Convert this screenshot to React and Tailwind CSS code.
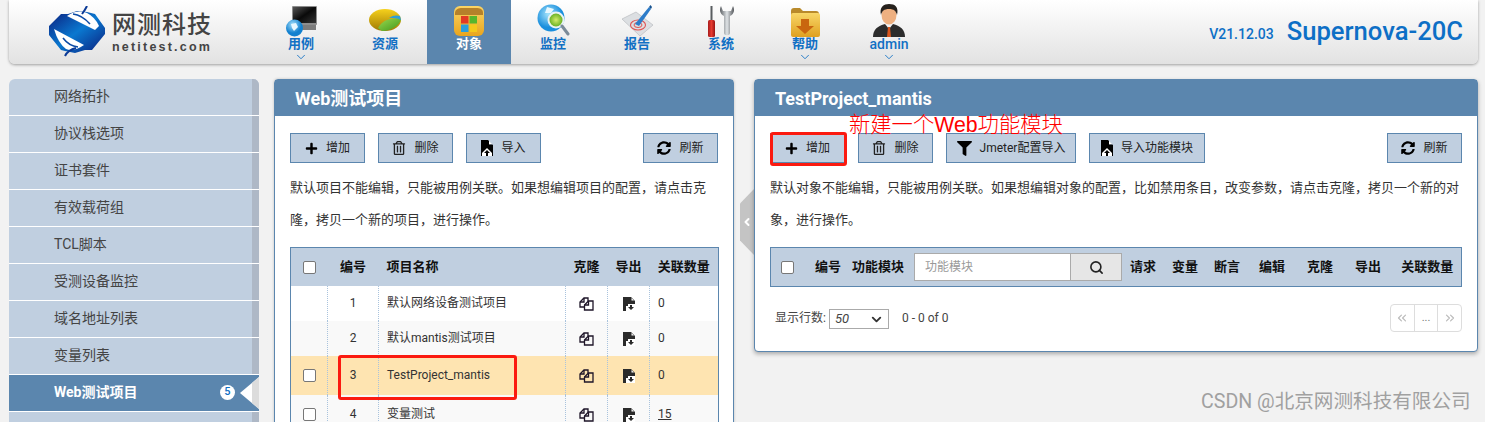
import React from "react";
import { ChevronDown, ChevronLeft, Search, ChevronsLeft, ChevronsRight } from "lucide-react";
import { FaPlus, FaRegTrashAlt, FaFilter, FaSyncAlt } from "react-icons/fa";

const FONT = "font-['Roboto','Noto_Sans_CJK_SC',sans-serif]";

const Logo = () => (
  <svg width="56" height="52" viewBox="0 0 56 52">
    <defs>
      <linearGradient id="lg" x1="0" y1="0" x2="1" y2="1">
        <stop offset="0.1" stopColor="#0b2f8c" />
        <stop offset=".5" stopColor="#0a78d0" />
        <stop offset="0.9" stopColor="#0b2f8c" />
      </linearGradient>
    </defs>
    <path d="M0 20 L12 8 H19 L28 5 L38 6 L46 8 L56 22 V28 L43 44 H36 L26 47 L16 45 L12 44 L0 29 Z" fill="url(#lg)" />
    <path d="M18 10 Q28 3 38 7 Q46 11 50 20 L46 24 Z" fill="#fff" />
    <path d="M5 23 L35 39 Q25 46 17 43 Q9 37 5 23 Z" fill="#fff" />
    <path d="M24 8 Q33 9 41 18" fill="none" stroke="#0b4aa5" strokeWidth="1.6" />
    <path d="M14 32 Q20 40 29 41" fill="none" stroke="#0b4aa5" strokeWidth="1.6" />
    <path d="M33 8 Q36 4 38 0" fill="none" stroke="#0b3a96" strokeWidth="2" />
    <path d="M16 50 Q19 44 27 42" fill="none" stroke="#0b3a96" strokeWidth="2" />
  </svg>
);

const IconMonitor = () => (
  <svg width="32" height="32" viewBox="0 0 32 32">
    <defs>
      <linearGradient id="m1" x1="0" y1="0" x2="1" y2="1"><stop offset="0" stopColor="#555" /><stop offset=".5" stopColor="#0a0a0a" /><stop offset="1" stopColor="#333" /></linearGradient>
      <radialGradient id="m2" cx=".4" cy=".3"><stop offset="0" stopColor="#a5e0fb" /><stop offset="1" stopColor="#1180cf" /></radialGradient>
    </defs>
    <rect x="7" y="1" width="25" height="19" rx="1" fill="#8d8d8d" />
    <rect x="8" y="2" width="23" height="16" fill="url(#m1)" />
    <path d="M16 20 H31 V25 H16 Z" fill="#7c7c7c" />
    <circle cx="9.5" cy="23" r="8.5" fill="url(#m2)" />
    <path d="M6 19 L11 18 L13 22 L9 26 L7 23 Z" fill="#e8f8ff" />
  </svg>
);
const IconPie = () => (
  <svg width="32" height="32" viewBox="0 0 32 32">
    <defs>
      <linearGradient id="p1" x1="0" y1="0" x2="0" y2="1"><stop offset="0" stopColor="#f6d11c" /><stop offset="1" stopColor="#a07a04" /></linearGradient>
      <linearGradient id="p2" x1="0" y1="0" x2="1" y2="1"><stop offset="0" stopColor="#9ad94e" /><stop offset="1" stopColor="#3f961c" /></linearGradient>
    </defs>
    <ellipse cx="16" cy="15" rx="16" ry="11" fill="url(#p1)" />
    <path d="M9 23 C13 16 20 12 32 14 C31 20 22 26 13 26 Z" fill="url(#p2)" />
    <path d="M20 13 C24 10 28 10 31 11 L32 15 C28 13 24 13 20 13 Z" fill="#2c9fd8" />
  </svg>
);
const IconWinFolder = () => (
  <svg width="32" height="32" viewBox="0 0 32 32">
    <defs>
      <linearGradient id="w1" x1="0" y1="0" x2="0" y2="1"><stop offset="0" stopColor="#fbd566" /><stop offset="1" stopColor="#e9a51d" /></linearGradient>
    </defs>
    <rect x="1" y="1" width="30" height="30" rx="6" fill="url(#w1)" />
    <path d="M2 8 C2 4 6 3 9 3 H23 C27 3 30 4 30 8 V10 H2 Z" fill="#b5812a" />
    <rect x="8" y="11" width="7.5" height="7.5" fill="#e23b24" />
    <rect x="16.5" y="11" width="7.5" height="7.5" fill="#57b62c" />
    <rect x="8" y="19.5" width="7.5" height="7.5" fill="#2a9edb" />
    <rect x="16.5" y="19.5" width="7.5" height="7.5" fill="#f4c91c" />
  </svg>
);
const IconGlobeLens = () => (
  <svg width="33" height="33" viewBox="0 0 33 33">
    <defs>
      <radialGradient id="g1" cx=".4" cy=".35"><stop offset="0" stopColor="#a4e3fb" /><stop offset="1" stopColor="#1a8fdd" /></radialGradient>
      <radialGradient id="g2"><stop offset="0" stopColor="#d4ec6a" /><stop offset="1" stopColor="#5aa91a" /></radialGradient>
    </defs>
    <circle cx="14" cy="14" r="13.5" fill="url(#g1)" />
    <path d="M10 3 L17 5 L14 9 L8 9 Z" fill="#e6f8ff" />
    <circle cx="19" cy="16" r="7.5" fill="url(#g2)" stroke="#e9f2f4" strokeWidth="2" />
    <path d="M25 22 L31 30" stroke="#7b8b99" strokeWidth="3" strokeLinecap="round" />
  </svg>
);
const IconReport = () => (
  <svg width="33" height="33" viewBox="0 0 33 33">
    <path d="M1 15 L15 8 L32 21 L19 32 Z" fill="#dcdfe2" stroke="#b9bcc0" strokeWidth=".7" />
    <ellipse cx="17" cy="21" rx="7.5" ry="5" fill="none" stroke="#e05454" strokeWidth="1.1" />
    <ellipse cx="17" cy="21" rx="4" ry="2.5" fill="none" stroke="#e05454" strokeWidth="1" />
    <path d="M14 20 L28 3 L30 5 L18 22 Z" fill="#2d7cc9" />
    <path d="M28 3 L29.5 1 L31 3 L30 5 Z" fill="#16528f" />
  </svg>
);
const IconTools = () => (
  <svg width="28" height="32" viewBox="0 0 28 32">
    <defs>
      <linearGradient id="t1" x1="0" x2="1"><stop offset="0" stopColor="#a81c1c" /><stop offset=".5" stopColor="#e53a30" /><stop offset="1" stopColor="#981414" /></linearGradient>
      <linearGradient id="t2" x1="0" x2="1"><stop offset="0" stopColor="#5b5f63" /><stop offset=".5" stopColor="#dfe3e6" /><stop offset="1" stopColor="#53565a" /></linearGradient>
    </defs>
    <rect x="3.5" y="1" width="2" height="15" fill="#595d60" />
    <rect x="1" y="15" width="7" height="17" rx="1.5" fill="url(#t1)" />
    <path d="M14 1 C12 5 13 9 17 11 V28 C17 31 23 31 23 28 V11 C27 9 28 5 26 1 L24 6 H16 Z" fill="url(#t2)" />
  </svg>
);
const IconHelpFolder = () => (
  <svg width="30" height="30" viewBox="0 0 30 30">
    <defs>
      <linearGradient id="h1" x1="0" y1="0" x2="0" y2="1"><stop offset="0" stopColor="#f8d667" /><stop offset="1" stopColor="#dfa020" /></linearGradient>
    </defs>
    <path d="M1 4 C1 2 2 1 4 1 H10 L13 4 H26 C28 4 29 5 29 7 V10 H1 Z" fill="#b98a2b" />
    <rect x="1" y="6" width="29" height="24" rx="2" fill="url(#h1)" />
    <path d="M11 12 H19 V19 H24 L15 27 L6 19 H11 Z" fill="#c9660f" />
  </svg>
);
const IconAdmin = () => (
  <svg width="32" height="33" viewBox="0 0 32 33">
    <path d="M0 33 C0 25 5 22 12 20 H20 C27 22 32 25 32 33 Z" fill="#2c2c2c" />
    <path d="M12 20 L16 25 L20 20 Z" fill="#f2f2f2" />
    <path d="M15 23 H17 L18 33 H14 Z" fill="#d8551d" />
    <ellipse cx="16" cy="11" rx="7.5" ry="9.5" fill="#eeb081" />
    <path d="M8 11 C6 3 11 0 16 0 C22 0 26 3 24 11 C23 7 21 5 16 5 C11 5 9 7 8 11 Z" fill="#26211d" />
  </svg>
);

const navItems = [
  { label: "用例", icon: <IconMonitor />, caret: true },
  { label: "资源", icon: <IconPie /> },
  { label: "对象", icon: <IconWinFolder />, active: true },
  { label: "监控", icon: <IconGlobeLens /> },
  { label: "报告", icon: <IconReport /> },
  { label: "系统", icon: <IconTools /> },
  { label: "帮助", icon: <IconHelpFolder />, caret: true },
  { label: "admin", icon: <IconAdmin />, caret: true },
];

const Header = () => (
  <header className="mx-[9px] mr-[7px] h-[64px] flex rounded-b-[6px] bg-gradient-to-b from-[#ffffff] to-[#e2e2e2] shadow-[0_1px_3px_rgba(0,0,0,0.35)]">
    <div className="w-[250px] flex items-center pl-[40px] shrink-0">
      <Logo />
      <div className="ml-[7px] flex flex-col">
        <span className="text-[24px] leading-[28px] font-medium text-[#444] tracking-[1px]">网测科技</span>
        <span className="mt-[1px] font-['Liberation_Sans',sans-serif] text-[12.5px] leading-[14px] font-bold text-[#444] tracking-[2.2px]">netitest.com</span>
      </div>
    </div>
    <nav className="flex">
      {navItems.map((n) => (
        <div key={n.label} className={`w-[84px] h-[64px] relative flex flex-col items-center ${n.active ? "bg-[#5b86ae] text-white" : "text-[#1170c4]"}`}>
          <div className="h-[35px] mt-[2px] flex items-end justify-center">{n.icon}</div>
          <span className={`mt-[-2px] leading-[18px] ${n.label === "admin" ? "text-[14px] font-medium" : "text-[13px] font-bold"}`}>{n.label}</span>
          {n.caret && <ChevronDown size={14} strokeWidth={1.5} className="absolute top-[50px] text-[#1170c4]" />}
        </div>
      ))}
    </nav>
    <div className="ml-auto mr-[15px] flex items-center gap-[13px] text-[#0d6fc6] font-medium">
      <span className="text-[14px] mt-[5px]">V21.12.03</span>
      <span className="text-[25.6px] leading-[30px] -mt-[2px]">Supernova-20C</span>
    </div>
  </header>
);

const sideItems = ["网络拓扑", "协议栈选项", "证书套件", "有效载荷组", "TCL脚本", "受测设备监控", "域名地址列表", "变量列表", "Web测试项目", ""];

const Sidebar = () => (
  <aside className="w-[250px] ml-[9px] shrink-0 rounded-t-[6px] overflow-hidden self-start">
    {sideItems.map((t) => {
      const active = t === "Web测试项目";
      return (
        <div key={t || "empty"} className={`h-[37px] flex items-stretch border-b border-white ${active ? "bg-[#5b86ae]" : "bg-[#c0cfe0]"}`}>
          <div className={`flex-1 pl-[45px] pb-[2px] flex items-center text-[14px] ${active ? "text-white font-bold" : "text-[#444]"}`}>
            {t}
            {active && (
              <span className="ml-auto mr-[17px] w-[15px] h-[15px] rounded-full bg-white text-[#1170c4] text-[11px] font-medium flex items-center justify-center">5</span>
            )}
          </div>
          {active ? (
            <svg width="19" height="36" viewBox="0 0 19 36" className="-ml-[12px]">
              <path d="M0 18 L19 2 V34 Z" fill="#ffffff" />
              <path d="M12 8 L19 2 V34 L12 28 Z" fill="#dcdcdc" />
            </svg>
          ) : (
            <div className="w-[7px] bg-[#aeb8c6]" />
          )}
        </div>
      );
    })}
  </aside>
);

const Btn = ({ w, icon, children }) => (
  <button className={`${w} h-[30px] shrink-0 border border-[#5b86ae] bg-[#c0cfe0] flex items-center justify-center gap-[8px] text-[12px] text-[#222]`}>
    {icon}
    <span>{children}</span>
  </button>
);

const ImportIcon = () => (
  <svg width="12" height="16" viewBox="0 0 12 16">
    <path d="M0 0 H7 L12 5 V16 H0 Z" fill="#000" />
    <path d="M8 0.5 L12 4.5 H8 Z" fill="#c0cfe0" />
    <path d="M8 1 L11 4 H8 Z" fill="#fff" />
    <path d="M6 8 L11 13 V16 H1 V13 Z" fill="#fff" />
    <path d="M6 10 L9 13 H7 V16 H5 V13 H3 Z" fill="#000" />
  </svg>
);
const ExportIcon = () => (
  <svg width="12" height="14" viewBox="0 0 12 14" className="inline-block">
    <path d="M0 0 H8 L12 4 V14 H0 Z" fill="#2b2b2b" />
    <path d="M8.5 1 L11 3.5 H8.5 Z" fill="#fff" />
    <path d="M3 9 H5 V7 H12 V14 H3 Z" fill="#fff" />
    <path d="M7 8 H9 V10 H11 L8 13 L5 10 H7 Z" fill="#2b2b2b" />
  </svg>
);
const CloneIcon = () => (
  <svg width="15" height="15" viewBox="0 0 15 15" fill="none" stroke="#1e1528" strokeWidth="1.3" className="inline-block">
    <path d="M5.5 11 H1 V6 L5 2 H9 V5" />
    <path d="M5 2 V6 H1" />
    <path d="M5.5 9 L9.5 5 H14 V14 H5.5 Z" />
    <path d="M9.5 5 V9 H5.5" />
  </svg>
);

const Check = () => <span className="inline-block align-middle w-[13px] h-[13px] bg-white border border-[#777] rounded-[2px]" />;

const rows = [
  { n: "1", name: "默认网络设备测试项目", c: "0", h: "h-[35px]", bg: "bg-white", check: false },
  { n: "2", name: "默认mantis测试项目", c: "0", h: "h-[35px]", bg: "bg-[#f9f9f9]", check: false },
  { n: "3", name: "TestProject_mantis", c: "0", h: "h-[39px]", bg: "bg-[#fee4b1]", check: true },
  { n: "4", name: "变量测试", c: "15", h: "h-[39px]", bg: "bg-[#f9f9f9]", check: true, link: true },
];
const cellBorder = "border-l border-dotted border-[#a9c3dd]";

const LeftPanel = () => (
  <section className="w-[460px] shrink-0 h-[360px] border border-[#5b86ae] rounded-t-[4px] bg-white self-start shadow-[0_0_3px_rgba(0,0,0,0.2)]">
    <div className="h-[36px] bg-[#5b86ae] pl-[20px] flex items-center text-[18px] font-bold text-white">Web测试项目</div>
    <div className="px-[15px] pt-[17px]">
      <div className="flex gap-[13px]">
        <Btn w="w-[75px]" icon={<FaPlus size={13} color="#000" />}>增加</Btn>
        <Btn w="w-[75px]" icon={<FaRegTrashAlt size={14} color="#222" />}>删除</Btn>
        <Btn w="w-[75px]" icon={<ImportIcon />}>导入</Btn>
        <div className="ml-auto"><Btn w="w-[75px]" icon={<FaSyncAlt size={14} color="#000" />}>刷新</Btn></div>
      </div>
      <p className="mt-[9px] text-[13px] leading-[32px] text-[#333]">默认项目不能编辑，只能被用例关联。如果想编辑项目的配置，请点击克隆，拷贝一个新的项目，进行操作。</p>
      <table className="mt-[11px] w-[428px] table-fixed border-collapse border border-[#5b86ae] text-[12px] text-[#333]">
        <colgroup>
          <col className="w-[37px]" /><col className="w-[51px]" /><col className="w-[187px]" /><col className="w-[42px]" /><col className="w-[42px]" /><col className="w-[69px]" />
        </colgroup>
        <thead>
          <tr className="h-[38px] bg-[#c0cfe0] text-[13px] font-bold text-[#111]">
            <th className="font-bold"><Check /></th>
            <th className="font-bold">编号</th>
            <th className="font-bold text-left pl-[8px]">项目名称</th>
            <th className="font-bold">克隆</th>
            <th className="font-bold">导出</th>
            <th className="font-bold">关联数量</th>
          </tr>
        </thead>
        <tbody>
          {rows.map((r) => (
            <tr key={r.n} className={`${r.h} ${r.bg}`}>
              <td className="text-center">{r.check && <Check />}</td>
              <td className={`${cellBorder} text-center`}>{r.n}</td>
              <td className={`${cellBorder} pl-[8px] whitespace-nowrap`}>{r.name}</td>
              <td className={`${cellBorder} text-center`}><CloneIcon /></td>
              <td className={`${cellBorder} text-center`}><ExportIcon /></td>
              <td className={`${cellBorder} pl-[8px]`}>{r.link ? <span className="underline">{r.c}</span> : r.c}</td>
            </tr>
          ))}
        </tbody>
      </table>
    </div>
  </section>
);

const headTail = [
  ["请求", "ml-[8px]"], ["变量", "ml-[16px]"], ["断言", "ml-[16px]"], ["编辑", "ml-[19px]"],
  ["克隆", "ml-[22px]"], ["导出", "ml-[22px]"], ["关联数量", "ml-[20px]"],
];

const RightPanel = () => (
  <section className="relative w-[724px] shrink-0 h-[273px] border border-[#5b86ae] rounded-[4px] bg-white self-start shadow-[0_2px_4px_rgba(0,0,0,0.3)]">
    <div className="h-[36px] bg-[#5b86ae] pl-[20px] flex items-center text-[18px] font-bold text-white">TestProject_mantis</div>
    <div className="px-[15px] pt-[17px]">
      <div className="flex gap-[13px]">
        <Btn w="w-[75px]" icon={<FaPlus size={13} color="#000" />}>增加</Btn>
        <Btn w="w-[75px]" icon={<FaRegTrashAlt size={14} color="#222" />}>删除</Btn>
        <Btn w="w-[130px]" icon={<FaFilter size={15} color="#000" />}>Jmeter配置导入</Btn>
        <Btn w="w-[116px]" icon={<ImportIcon />}>导入功能模块</Btn>
        <div className="ml-auto"><Btn w="w-[75px]" icon={<FaSyncAlt size={14} color="#000" />}>刷新</Btn></div>
      </div>
      <p className="mt-[9px] text-[13px] leading-[32px] text-[#333]">默认对象不能编辑，只能被用例关联。如果想编辑对象的配置，比如禁用条目，改变参数，请点击克隆，拷贝一个新的对象，进行操作。</p>
      <div className="mt-[11px] h-[40px] w-[692px] border border-[#5b86ae] bg-[#c0cfe0] flex items-center text-[13px] font-bold text-[#111]">
        <span className="ml-[10px] flex"><Check /></span>
        <span className="ml-[21px]">编号</span>
        <span className="ml-[11px]">功能模块</span>
        <div className="ml-[10px] w-[208px] h-[28px] flex border border-[#aaa] bg-white font-normal">
          <span className="flex-1 pl-[10px] flex items-center text-[12px] text-[#999]">功能模块</span>
          <span className="w-[51px] bg-[#e6e6e6] border-l border-[#aaa] flex items-center justify-center"><Search size={15} strokeWidth={2.6} color="#222" /></span>
        </div>
        {headTail.map(([t, m]) => <span key={t} className={m}>{t}</span>)}
      </div>
      <div className="mt-[17px] flex items-start text-[12px] text-[#444]">
        <span className="ml-[5px] mt-[5px]">显示行数:</span>
        <div className="ml-[3px] mt-[5px] w-[60px] h-[20px] border border-[#aaa] flex items-center justify-between pl-[5px] pr-[4px] text-[13px] italic">
          50<ChevronDown size={15} strokeWidth={3} color="#333" />
        </div>
        <span className="ml-[13px] mt-[5px]">0 - 0 of 0</span>
        <div className="ml-auto h-[28px] w-[72px] flex border border-[#ddd] rounded-[4px] text-[#bbb]">
          <span className="flex-1 flex items-center justify-center"><ChevronsLeft size={14} /></span>
          <span className="flex-1 flex items-center justify-center border-x border-[#ddd] text-[#777] text-[11px]">...</span>
          <span className="flex-1 flex items-center justify-center"><ChevronsRight size={14} /></span>
        </div>
      </div>
    </div>
    <span className="absolute left-[94px] top-[33px] text-[21.3px] leading-[24px] text-[#ff0000] font-light font-['Liberation_Sans','Noto_Sans_CJK_SC',sans-serif] whitespace-nowrap">新建一个Web功能模块</span>
    <div className="absolute left-[15px] top-[52px] w-[77px] h-[34px] border-[3px] border-[#fb1a10] rounded-[3px]" />
  </section>
);

const Handle = () => (
  <div className="w-[20px] shrink-0 relative self-start">
    <div className="absolute left-[6px] top-[110px] w-[14px] h-[66px] bg-[#c4c4c4] [clip-path:polygon(100%_0,100%_100%,0_78%,0_22%)] flex items-center justify-center">
      <ChevronLeft size={12} strokeWidth={4} color="#fff" />
    </div>
  </div>
);

export default function App() {
  return (
    <div className={`${FONT} relative h-[422px] w-[1485px] overflow-hidden bg-[#f2f2f2]`}>
      <Header />
      <main className="mt-[15px] flex">
        <Sidebar />
        <div className="w-[15px] shrink-0" />
        <LeftPanel />
        <Handle />
        <RightPanel />
      </main>
      <div className="absolute left-[338px] top-[355px] w-[179px] h-[45px] border-[3px] border-[#fb1a10] rounded-[3px]" />
      <span className="absolute left-[1201px] top-[390px] text-[19.6px] leading-[24px] text-[#8c8c8c] opacity-80 whitespace-nowrap">CSDN @北京网测科技有限公司</span>
    </div>
  );
}
